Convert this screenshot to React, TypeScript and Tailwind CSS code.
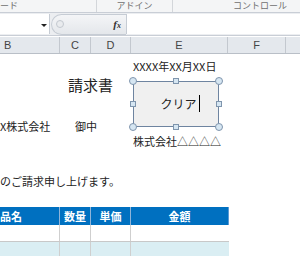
import React from "react";

const jp = { fontFamily: '"Noto Sans CJK JP", "Noto Sans", sans-serif' };

function Handle({ round, className }: { round?: boolean; className: string }) {
  return (
    <div
      className={`absolute border border-[#7f95ad] bg-[#d6e6f2] ${round ? "w-[8px] h-[8px] rounded-full" : "w-[6px] h-[6px]"} ${className}`}
    />
  );
}

export default function App() {
  const cols = [
    { w: 60, label: "B", align: "justify-start pl-[4px]" },
    { w: 31, label: "C", align: "justify-center" },
    { w: 40, label: "D", align: "justify-center" },
    { w: 97, label: "E", align: "justify-center" },
    { w: 58, label: "F", align: "justify-center" },
    { w: 20, label: "", align: "justify-center" },
  ];

  return (
    <div className="relative w-[300px] h-[256px] overflow-hidden bg-white text-[#222]" style={jp}>
      {/* ribbon group labels */}
      <div className="flex h-[13px] bg-[#f4f5f6] border-b border-[#c9ced6] text-[9px] leading-[12px] text-[#707070]">
        <div className="w-[97px] shrink-0 border-r border-[#d3d6da]">ード</div>
        <div className="w-[76px] shrink-0 border-r border-[#d3d6da] text-center">アドイン</div>
        <div className="flex-1 pl-[60px] whitespace-nowrap">コントロール</div>
      </div>

      {/* formula bar */}
      <div className="flex h-[23px] bg-[#eceef1] border-b border-[#c9ced6]">
        <div className="relative w-[50px] shrink-0 bg-white border-r border-[#c6ccd4] my-[1px]">
          <div className="absolute left-[41px] top-[10px] w-0 h-0 border-l-[3px] border-r-[3px] border-t-[3px] border-l-transparent border-r-transparent border-t-[#222]" />
        </div>
        <div className="relative w-[76px] shrink-0 flex items-center">
          <div className="ml-[1px] h-[21px] flex-1 rounded-l-full border border-r-0 border-[#c6ccd4] bg-gradient-to-b from-[#f4f5f7] to-[#e4e7eb] flex items-center">
            <div className="ml-[4px] w-[8px] h-[8px] rounded-full border border-[#c3c8cf] bg-[#e9ebee]" />
            <div className="ml-auto mr-[5px] text-[11px] italic font-bold text-[#333]" style={{ fontFamily: '"Liberation Serif", serif' }}>
              f<span className="text-[8px]">x</span>
            </div>
          </div>
        </div>
        <div className="flex-1 bg-white border-l border-[#c6ccd4] my-[1px]" />
      </div>

      {/* column headers */}
      <div className="flex h-[17px] mt-[1px] bg-[#e4e8ed] border-b border-[#b9bfc7] text-[11px] leading-[16px] text-[#444]" style={{ fontFamily: '"Liberation Sans", Arial, sans-serif' }}>
        {cols.map((c) => (
          <div key={c.label + c.w} style={{ width: c.w }} className={`shrink-0 flex border-r border-[#c3c8cf] ${c.align}`}>
            {c.label}
          </div>
        ))}
      </div>

      {/* sheet content */}
      <div className="flex flex-col text-[11px]">
        <div className="mt-[6px] h-[12px] leading-[12px] pl-[133px] whitespace-nowrap">XXXX年XX月XX日</div>
        <div className="mt-[5px] h-[16px] leading-[16px] pl-[68px] text-[15px]">請求書</div>
        <div className="mt-[27px] h-[12px] leading-[12px] flex whitespace-nowrap">
          <span className="w-[75px]">X株式会社</span>
          <span>御中</span>
        </div>
        <div className="mt-[3px] h-[12px] leading-[12px] pl-[133px] whitespace-nowrap">株式会社△△△△</div>
        <div className="mt-[28px] h-[12px] leading-[12px] whitespace-nowrap">のご請求申し上げます。</div>

        {/* table */}
        <div className="mt-[20px] w-[229px]">
          <div className="flex h-[18px] bg-[#0070c0] text-white font-bold text-[11px] leading-[18px] border-r border-[#5b9bd5]">
            <div className="w-[60px] shrink-0 border-r border-[#8fb4d9] whitespace-nowrap">品名</div>
            <div className="w-[31px] shrink-0 border-r border-[#8fb4d9] text-center">数量</div>
            <div className="w-[40px] shrink-0 border-r border-[#8fb4d9] text-center">単価</div>
            <div className="flex-1 text-center">金額</div>
          </div>
          <div className="flex h-[17px] bg-white border-b border-[#c8c8c8]">
            <div className="w-[60px] shrink-0 border-r border-[#cfcfcf]" />
            <div className="w-[31px] shrink-0 border-r border-[#cfcfcf]" />
            <div className="w-[40px] shrink-0 border-r border-[#cfcfcf]" />
            <div className="flex-1" />
          </div>
          <div className="flex h-[16px] bg-[#daeef3]">
            <div className="w-[60px] shrink-0 border-r border-[#cfcfcf]" />
            <div className="w-[31px] shrink-0 border-r border-[#cfcfcf]" />
            <div className="w-[40px] shrink-0 border-r border-[#cfcfcf]" />
            <div className="flex-1" />
          </div>
        </div>
      </div>

      {/* selected button shape */}
      <div className="absolute left-[133px] top-[81px] w-[86px] h-[46px]">
        <div className="absolute inset-[0px] border border-[#6e84a0] bg-[#f0f0f0]" />
        <div className="absolute left-0 right-0 top-[15px] flex justify-center text-[12px] leading-[16px]">
          <span className="ml-[8px]">クリア</span>
          <span className="ml-[2px] mt-[-1px] w-[1px] h-[17px] bg-black" />
        </div>
        <Handle round className="-left-[4px] -top-[4px]" />
        <Handle round className="-right-[4px] -top-[4px]" />
        <Handle round className="-left-[4px] -bottom-[4px]" />
        <Handle round className="-right-[4px] -bottom-[4px]" />
        <Handle className="left-[40px] -top-[3px]" />
        <Handle className="left-[40px] -bottom-[3px]" />
        <Handle className="-left-[3px] top-[20px]" />
        <Handle className="-right-[3px] top-[20px]" />
      </div>
    </div>
  );
}
